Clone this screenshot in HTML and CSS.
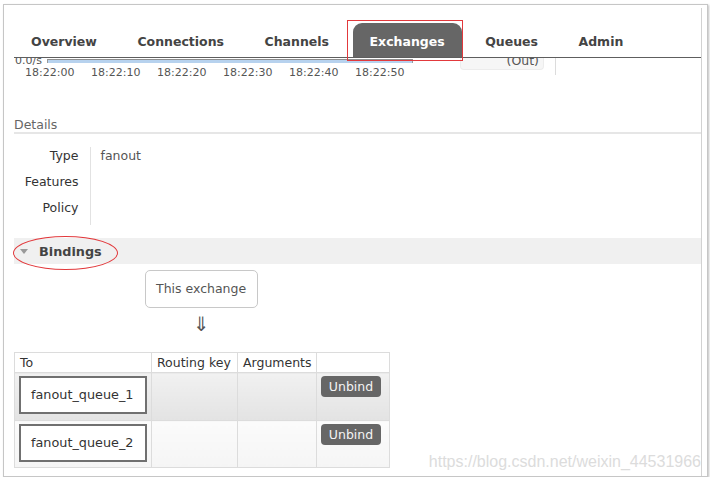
FILE: index.html
```html
<!DOCTYPE html>
<html>
<head>
<meta charset="utf-8">
<link rel="stylesheet" href="styles.css">
</head>
<body>
<div class="frame">
  <div class="page">
    <nav class="tabs">
      <a class="tab">Overview</a>
      <a class="tab">Connections</a>
      <a class="tab">Channels</a>
      <a class="tab active">Exchanges<span class="mark-rect"></span></a>
      <a class="tab">Queues</a>
      <a class="tab">Admin</a>
    </nav>

    <div class="chart">
      <div class="plot">
        <div class="plot-top">
          <div class="rate"><span>0.0/s</span></div>
          <div class="bar"></div>
        </div>
        <div class="ticks">
          <span class="tick">18:22:00</span>
          <span class="tick">18:22:10</span>
          <span class="tick">18:22:20</span>
          <span class="tick">18:22:30</span>
          <span class="tick">18:22:40</span>
          <span class="tick">18:22:50</span>
        </div>
      </div>
      <div class="out"><span>(Out)</span></div>
      <div class="vline"></div>
    </div>

    <h3 class="section-title">Details</h3>
    <table class="facts">
      <tr><th>Type</th><td>fanout</td></tr>
      <tr><th>Features</th><td></td></tr>
      <tr><th>Policy</th><td></td></tr>
    </table>

    <div class="section-head"><span class="tri"></span>Bindings<span class="mark-ellipse"></span></div>

    <div class="bindings">
      <div class="source">This exchange</div>
      <div class="arrow">&#8659;</div>
      <table class="list">
        <thead>
          <tr><th class="c1">To</th><th class="c2">Routing key</th><th class="c3">Arguments</th><th class="c4"></th></tr>
        </thead>
        <tbody>
          <tr class="alt1">
            <td><div class="qbox">fanout_queue_1</div></td>
            <td></td><td></td>
            <td><span class="btn">Unbind</span></td>
          </tr>
          <tr class="alt2">
            <td><div class="qbox">fanout_queue_2</div></td>
            <td></td><td></td>
            <td><span class="btn">Unbind</span></td>
          </tr>
        </tbody>
      </table>
    </div>
  </div>
  <div class="watermark">https://blog.csdn.net/weixin_44531966</div>
</div>
</body>
</html>
```
FILE: styles.css
```css
* { box-sizing: border-box; }
html, body { margin: 0; padding: 0; background: #fff; }
body {
  font-family: "DejaVu Sans", Verdana, sans-serif;
  font-size: 12.5px;
  color: #444;
}
.frame {
  position: relative;
  margin: 4px 0 0 3px;
  width: 705px;
  height: 473px;
  border: 1px solid #c6c6c6;
  box-shadow: 1px 1px 2px rgba(0,0,0,0.25);
  overflow: hidden;
  background: #fff;
}
.page {
  margin: 3px 0 0 10px;
  width: 688px;
  height: 470px;
  padding-top: 15px;
  border-right: 1px solid #d2d2d2;
}

/* tabs */
.tabs {
  display: flex;
  height: 35px;
  border-bottom: 1px solid #5e5e5e;
}
.tab {
  position: relative;
  display: block;
  padding: 3px 17px 0;
  margin-right: 6.5px;
  line-height: 31px;
  height: 34px;
  font-weight: bold;
  font-size: 12.5px;
  color: #444;
}
.tab.active {
  background: #666;
  color: #fff;
  border-radius: 9px 9px 0 0;
}
.mark-rect {
  position: absolute;
  left: -6px; top: -3px; right: -1px; bottom: -4px;
  border: 1.5px solid #e2393c;
}

/* chart fragment */
.chart { display: flex; height: 22px; }
.plot { width: 399px; }
.plot-top { display: flex; height: 9px; }
.rate {
  margin-left: 1px;
  width: 30px;
  height: 9px;
  overflow: hidden;
  font-size: 11px;
  line-height: 11px;
  color: #555;
}
.rate span { display: block; margin-top: -3px; }
.bar {
  margin: 1px 0 0 2px;
  width: 366px;
  height: 4px;
  background: #b7d2ee;
  border-top: 1px solid #8e8e8e;
  border-left: 1px solid #999;
  border-right: 1px solid #999;
}
.ticks { display: flex; padding-left: 11px; height: 12px; }
.tick {
  width: 66px;
  flex: none;
  font-size: 11px;
  line-height: 12px;
  color: #555;
}
.out {
  margin-left: 47px;
  width: 84px;
  height: 12px;
  overflow: hidden;
  background: #f6f6f6;
  border: 1px solid #ececec;
  border-top: none;
  border-radius: 0 0 4px 4px;
  text-align: right;
  padding-right: 4px;
  color: #555;
}
.out span { display: block; line-height: 14px; margin-top: -4px; }
.vline { margin-left: 11px; width: 1px; height: 17px; background: #dcdcdc; }

/* details */
.section-title {
  margin: 37px 0 0;
  font-size: 12.5px;
  font-weight: normal;
  line-height: 15px;
  color: #666;
  border-bottom: 2px solid #e6e6e6;
}
.facts { margin-top: 13px; border-collapse: collapse; border-spacing: 0; }
.facts th {
  width: 76px;
  text-align: right;
  font-weight: normal;
  color: #333;
  line-height: 16px;
  padding: 1px 11px 9px 0;
  border-right: 1px solid #e2e2e2;
}
.facts td {
  padding: 1px 0 9px 10px;
  line-height: 16px;
  color: #555;
  vertical-align: top;
}

/* bindings */
.section-head {
  position: relative;
  margin-top: 13px;
  height: 26px;
  background: #f0f0f0;
  display: flex;
  align-items: center;
  padding-top: 2px;
  font-weight: bold;
  font-size: 12.8px;
  color: #444;
  line-height: 16px;
}
.tri {
  margin: -2px 11px 0 6px;
  width: 0; height: 0;
  border-left: 4.5px solid transparent;
  border-right: 4.5px solid transparent;
  border-top: 5px solid #9a9a9a;
}
.mark-ellipse {
  position: absolute;
  left: -1px; top: -2px;
  width: 105px; height: 34px;
  border: 1.5px solid #e2393c;
  border-radius: 50%;
}
.source {
  margin: 6px 0 0 131px;
  width: 113px;
  height: 38px;
  border: 1px solid #c8c8c8;
  border-radius: 5px;
  padding-left: 10px;
  line-height: 36px;
  color: #555;
}
.arrow {
  margin: 4px 0 0 131px;
  width: 113px;
  text-align: center;
  font-size: 20px;
  line-height: 24px;
  color: #555;
}
.list {
  margin-top: 16px;
  border-collapse: collapse;
  border-spacing: 0;
  border: 1px solid #dcdcdc;
  table-layout: fixed;
}
.list th {
  text-align: left;
  font-weight: normal;
  color: #333;
  padding: 2px 4px 1px 5px;
  line-height: 16px;
  border: 1px solid #dcdcdc;
  background: #fff;
}
.list th.c1 { width: 137px; }
.list th.c2 { width: 86px; }
.list th.c3 { width: 79px; }
.list th.c4 { width: 73px; }
.list td {
  border: 1px solid #dcdcdc;
  padding: 3px 4px 6px;
  vertical-align: top;
}
.list tr.alt2 td { padding-bottom: 5px; }
.list tr.alt1 td { background: linear-gradient(#f1f1f1, #e3e3e3); }
.list tr.alt2 td { background: linear-gradient(#fbfbfb, #f5f5f5); }
.qbox {
  width: 128px;
  height: 38px;
  border: 2px solid #707070;
  background: #fff;
  padding-left: 10px;
  line-height: 34px;
  color: #333;
  font-size: 12.8px;
}
.btn {
  display: inline-block;
  height: 21px;
  width: 60px;
  text-align: center;
  line-height: 21px;
  background: #666;
  color: #f4f4f4;
  border-radius: 4px;
  font-size: 12.5px;
}

.watermark {
  position: absolute;
  right: 6px;
  bottom: 5px;
  font-family: "Liberation Sans", Arial, sans-serif;
  font-size: 16px;
  color: #dcdcdc;
}
```
